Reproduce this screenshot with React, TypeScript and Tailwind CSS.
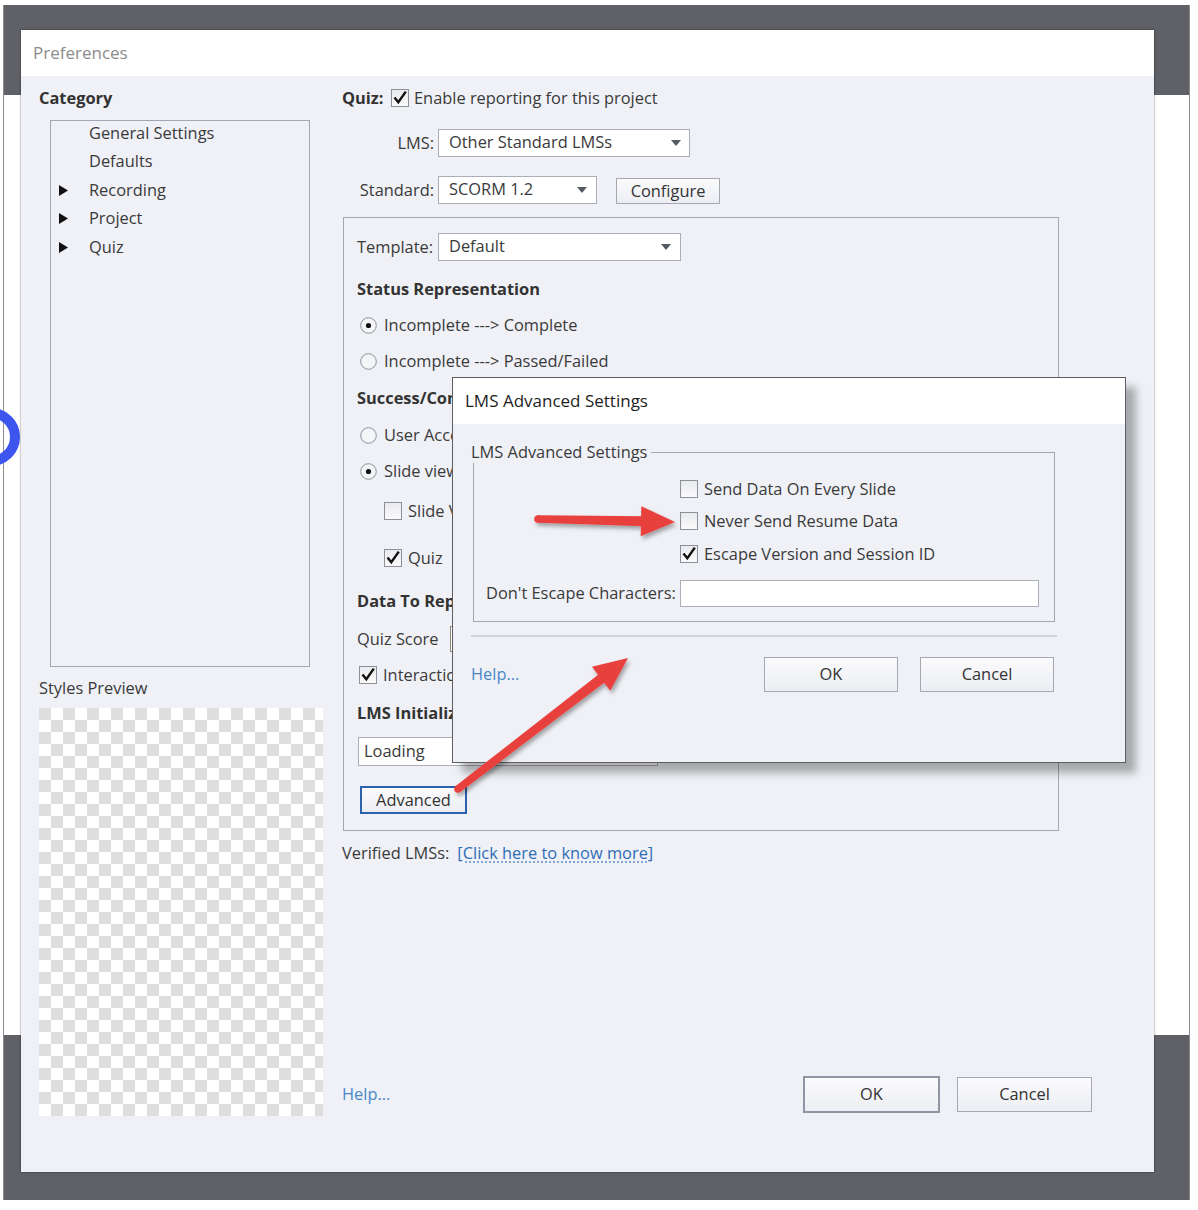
import React from "react";

const text = "text-[#3a3a3a]";

const CheckBox = ({ checked = false }: { checked?: boolean }) => (
  <svg width="18" height="18" viewBox="0 0 18 18" className="shrink-0">
    <defs>
      <linearGradient id="cbg" x1="0" y1="0" x2="0" y2="1">
        <stop offset="0" stopColor="#e9eaee" />
        <stop offset="1" stopColor="#fbfbfc" />
      </linearGradient>
    </defs>
    <rect x="0.5" y="0.5" width="17" height="17" fill="url(#cbg)" stroke="#8d9099" />
    {checked && <path d="M3.5 8.5 L7.3 13.2 L14.8 2.6" fill="none" stroke="#111" strokeWidth="2.4" />}
  </svg>
);

const Radio = ({ checked = false }: { checked?: boolean }) => (
  <svg width="17" height="17" viewBox="0 0 17 17" className="shrink-0">
    <circle cx="8.5" cy="8.5" r="7.8" fill="#f4f5f7" stroke="#8d9099" />
    {checked && <circle cx="8.5" cy="8.5" r="2.6" fill="#111" />}
  </svg>
);

const Caret = () => (
  <svg width="10" height="6" viewBox="0 0 10 6" className="shrink-0">
    <path d="M0 0 H10 L5 6 Z" fill="#555a63" />
  </svg>
);

const Select = ({ value, w, mr = 9 }: { value: string; w: string; mr?: number }) => (
  <div className={`${w} h-[28px] bg-white border border-[#abaeb6] flex items-center pl-[10px] ${mr === 8 ? "pr-[8px]" : "pr-[9px]"}`}>
    <span className="flex-1 -mt-[2px]">{value}</span>
    <Caret />
  </div>
);

const Btn = ({ label, cls }: { label: string; cls: string }) => (
  <div
    className={`${cls} flex items-center justify-center bg-[linear-gradient(#fbfbfd,#eceef3)] text-[#333]`}
  >
    {label}
  </div>
);

const RedArrow = ({ x1, y1, x2, y2 }: { x1: number; y1: number; x2: number; y2: number }) => {
  const dx = x2 - x1;
  const dy = y2 - y1;
  const len = Math.hypot(dx, dy);
  const ux = dx / len;
  const uy = dy / len;
  const px = -uy;
  const py = ux;
  const L = 34;
  const H = 15;
  const bx = x2 - ux * L;
  const by = y2 - uy * L;
  const head = `${x2},${y2} ${bx + px * H},${by + py * H} ${bx - px * H},${by - py * H}`;
  const shaft = [
    [x1 + px * 3.8, y1 + py * 3.8],
    [bx + ux * 3 + px * 5, by + uy * 3 + py * 5],
    [bx + ux * 3 - px * 5, by + uy * 3 - py * 5],
    [x1 - px * 3.8, y1 - py * 3.8],
  ]
    .map((p) => p.join(","))
    .join(" ");
  return (
    <g filter="url(#ash)">
      <circle cx={x1} cy={y1} r="3.8" fill="#e8413e" />
      <polygon points={shaft} fill="#e8413e" />
      <polygon points={head} fill="#e8413e" />
    </g>
  );
};

export default function App() {
  return (
    <div className={`relative w-[1198px] h-[1210px] bg-white overflow-hidden font-['Open_Sans',sans-serif] text-[16.4px] ${text}`}>
      {/* blue ring peeking from the left edge */}
      <svg width="21" height="70" viewBox="0 0 21 70" className="absolute left-0 top-[402px]">
        <circle cx="-9" cy="35" r="24" fill="none" stroke="#3d55ee" strokeWidth="10" />
      </svg>

      <div className="pt-[5px] pl-[3px]">
        {/* screenshot backdrop */}
        <div className="w-[1187px] h-[1195px] bg-[linear-gradient(to_bottom,#5f6167_0px,#5f6167_90px,#ffffff_90px,#ffffff_1030px,#5f6167_1030px)] border-x border-[#8a8a8a] pl-[17px] pt-[25px]">
          {/* Preferences dialog */}
          <div className="relative w-[1133px] h-[1142px] bg-[#eff1f6] shadow-[0_0_2px_rgba(0,0,0,0.55)] flex flex-col">
            <div className="h-[46px] bg-white flex items-center pl-[12px] text-[17px] text-[#8c8c8c]">Preferences</div>

            <div className="flex flex-1">
              {/* left column */}
              <div className="w-[321px] pl-[18px] flex flex-col">
                <div className="mt-[10px] h-[24px] leading-[24px] font-bold text-[#333]">Category</div>
                <div className="mt-[10px] ml-[11px] w-[260px] h-[547px] border border-[#a3a7b3]">
                  <div className="-mt-[2px]">
                    {[
                      ["General Settings", false],
                      ["Defaults", false],
                      ["Recording", true],
                      ["Project", true],
                      ["Quiz", true],
                    ].map(([label, arrow]) => (
                      <div key={label as string} className="h-[28.5px] flex items-center">
                        <div className="w-[38px] pl-[8px] flex items-center">
                          {arrow && (
                            <svg width="9" height="11" viewBox="0 0 9 11">
                              <path d="M0 0 L9 5.5 L0 11 Z" fill="#111" />
                            </svg>
                          )}
                        </div>
                        <span>{label}</span>
                      </div>
                    ))}
                  </div>
                </div>
                <div className="mt-[9px] h-[24px] leading-[24px]">Styles Preview</div>
                <div className="mt-[8px] w-[284px] h-[408px] bg-[conic-gradient(#fff_25%,#dedede_0_50%,#fff_0_75%,#dedede_0)] bg-size-[24px_24px]" />
              </div>

              {/* right column */}
              <div className="flex-1 flex flex-col">
                <div className="mt-[10px] h-[24px] flex items-center">
                  <span className="font-bold text-[#333] w-[49px]">Quiz:</span>
                  <CheckBox checked />
                  <span className="ml-[5px]">Enable reporting for this project</span>
                </div>
                <div className="mt-[19px] h-[28px] flex items-center">
                  <span className="w-[92px] text-right">LMS:</span>
                  <div className="ml-[4px]">
                    <Select value="Other Standard LMSs" w="w-[252px]" mr={8} />
                  </div>
                </div>
                <div className="mt-[19px] h-[28px] flex items-center">
                  <span className="w-[92px] text-right">Standard:</span>
                  <div className="ml-[4px]">
                    <Select value="SCORM 1.2" w="w-[159px]" />
                  </div>
                  <div className="ml-[19px] mt-[2px]">
                    <Btn label="Configure" cls="w-[104px] h-[26px] border border-[#a5a8b2]" />
                  </div>
                </div>

                {/* group box */}
                <div className="mt-[13px] ml-[1px] w-[716px] h-[614px] border border-[#a3a7b3] flex flex-col">
                  <div className="mt-[15px] h-[28px] flex items-center">
                    <span className="ml-[13px] w-[81px]">Template:</span>
                    <Select value="Default" w="w-[243px]" />
                  </div>
                  <div className="mt-[16px] h-[24px] leading-[24px] ml-[13px] font-bold text-[#333]">Status Representation</div>
                  <div className="mt-[12px] h-[24px] flex items-center ml-[16px] gap-[7px]">
                    <Radio checked />
                    <span>Incomplete ---&gt; Complete</span>
                  </div>
                  <div className="mt-[12px] h-[24px] flex items-center ml-[16px] gap-[7px]">
                    <Radio />
                    <span>Incomplete ---&gt; Passed/Failed</span>
                  </div>
                  <div className="mt-[13px] h-[24px] leading-[24px] ml-[13px] font-bold text-[#333]">Success/Completion Criteria</div>
                  <div className="mt-[13px] h-[24px] flex items-center ml-[16px] gap-[7px]">
                    <Radio />
                    <span>User Access</span>
                  </div>
                  <div className="mt-[12px] h-[24px] flex items-center ml-[16px] gap-[7px]">
                    <Radio checked />
                    <span>Slide views and/or Quiz</span>
                  </div>
                  <div className="mt-[16px] h-[24px] flex items-center ml-[40px] gap-[6px]">
                    <CheckBox />
                    <span>Slide Views</span>
                  </div>
                  <div className="mt-[23px] h-[24px] flex items-center ml-[40px] gap-[6px]">
                    <CheckBox checked />
                    <span>Quiz</span>
                  </div>
                  <div className="mt-[19px] h-[24px] leading-[24px] ml-[13px] font-bold text-[#333]">Data To Report</div>
                  <div className="mt-[14px] h-[24px] flex items-center ml-[13px]">
                    <span className="w-[93px]">Quiz Score</span>
                    <div className="w-[200px] h-[26px] bg-white border border-[#8f8778]" />
                  </div>
                  <div className="mt-[12px] h-[24px] flex items-center ml-[15px] gap-[6px]">
                    <CheckBox checked />
                    <span>Interaction Data</span>
                  </div>
                  <div className="mt-[14px] h-[24px] leading-[24px] ml-[13px] font-bold text-[#333]">LMS Initialization Text</div>
                  <div className="mt-[12px] ml-[14px] w-[300px] h-[29px] bg-white border border-[#abaeb6] flex items-center pl-[5px]">
                    Loading
                  </div>
                  <div className="mt-[20px] ml-[16px]">
                    <Btn label="Advanced" cls="w-[107px] h-[28px] border-2 border-[#2a62ad]" />
                  </div>
                </div>

                <div className="mt-[10px] h-[24px] flex items-center">
                  <span>Verified LMSs:</span>
                  <span className="ml-[8px] text-[#2f6db7] underline decoration-dotted decoration-[#5b8fd0] underline-offset-[3px]">
                    [Click here to know more]
                  </span>
                </div>

                <div className="mt-[211px] h-[37px] flex items-center">
                  <span className="w-[461px] text-[#4a88c7]">Help...</span>
                  <Btn label="OK" cls="w-[137px] h-[37px] border-2 border-[#9095a4]" />
                  <div className="ml-[17px]">
                    <Btn label="Cancel" cls="w-[135px] h-[35px] border border-[#a5a8b2]" />
                  </div>
                </div>
              </div>
            </div>

            {/* LMS Advanced Settings dialog */}
            <div className="absolute left-[431px] top-[347px] w-[674px] h-[386px] bg-[#eff1f6] border border-[#5c5e63] shadow-[10px_10px_8px_rgba(0,0,0,0.3)] flex flex-col">
              <div className="h-[46px] bg-white flex items-center pl-[12px] text-[17px] text-[#1e1e1e]">LMS Advanced Settings</div>
              <div className="mt-[17px] ml-[18px] w-[584px] h-[22px] flex items-end">
                <span className="self-center leading-[22px]">LMS Advanced Settings</span>
                <div className="flex-1 ml-[4px] h-[11px] border-t border-r border-[#a3a7b3]" />
              </div>
              <div className="ml-[20px] w-[582px] h-[159px] border-x border-b border-[#a3a7b3] flex flex-col">
                <div className="mt-[14px] h-[24px] flex items-center ml-[206px] gap-[6px]">
                  <CheckBox />
                  <span>Send Data On Every Slide</span>
                </div>
                <div className="mt-[8px] h-[24px] flex items-center ml-[206px] gap-[6px]">
                  <CheckBox />
                  <span>Never Send Resume Data</span>
                </div>
                <div className="mt-[9px] h-[24px] flex items-center ml-[206px] gap-[6px]">
                  <CheckBox checked />
                  <span>Escape Version and Session ID</span>
                </div>
                <div className="mt-[14px] h-[27px] flex items-center ml-[12px]">
                  <span className="w-[194px]">Don't Escape Characters:</span>
                  <div className="w-[359px] h-[27px] bg-white border border-[#abaeb6]" />
                </div>
              </div>
              <div className="mt-[13px] ml-[18px] w-[586px] h-[2px] bg-[#d2d5dd]" />
              <div className="mt-[20px] ml-[18px] h-[35px] flex items-center">
                <span className="w-[293px] text-[#4a88c7]">Help...</span>
                <Btn label="OK" cls="w-[134px] h-[35px] border border-[#a5a8b2]" />
                <div className="ml-[22px]">
                  <Btn label="Cancel" cls="w-[134px] h-[35px] border border-[#a5a8b2]" />
                </div>
              </div>
            </div>
          </div>
        </div>
      </div>

      {/* annotation arrows */}
      <svg width="1198" height="1210" viewBox="0 0 1198 1210" className="absolute left-0 top-0 pointer-events-none">
        <defs>
          <filter id="ash" x="-20%" y="-20%" width="140%" height="140%">
            <feDropShadow dx="2" dy="3" stdDeviation="2" floodColor="#000" floodOpacity="0.35" />
          </filter>
        </defs>
        <RedArrow x1={538} y1={519} x2={675} y2={522} />
        <RedArrow x1={458} y1={789} x2={628} y2={658} />
      </svg>
    </div>
  );
}
